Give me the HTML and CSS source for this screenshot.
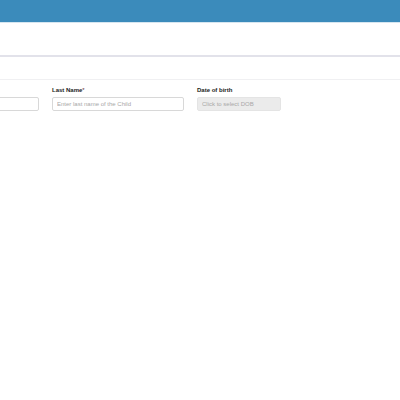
FILE: index.html
```html
<!DOCTYPE html>
<html>
<head>
<meta charset="utf-8">
<link rel="stylesheet" href="styles.css">
</head>
<body>
<header class="topbar"></header>
<div class="subbar"></div>
<div class="toolbar"></div>
<form class="form">
  <div class="row">
    <div class="field field-first">
      <span class="label"></span>
      <input class="input" type="text" aria-label="First Name">
    </div>
    <div class="field field-last">
      <label class="label">Last Name<span class="req">*</span></label>
      <input class="input" type="text" placeholder="Enter last name of the Child">
    </div>
    <div class="field field-dob">
      <label class="label">Date of birth</label>
      <input class="input input-readonly" type="text" placeholder="Click to select DOB" readonly>
    </div>
  </div>
</form>
</body>
</html>
```
FILE: styles.css
```css
html, body {
  margin: 0;
  padding: 0;
  background: #ffffff;
  font-family: "Liberation Sans", Arial, sans-serif;
}

.topbar {
  height: 22px;
  background: #3b8bbb;
  border-bottom: 1px solid #d6e6f0;
}

.subbar {
  height: 32px;
  background: #ffffff;
  border-bottom: 2px solid #e2e2ea;
}

.toolbar {
  height: 22px;
  background: #ffffff;
  border-bottom: 1px solid #f0f0f2;
}

.form {
  padding-top: 6px;
}

.row {
  display: flex;
  gap: 13px;
  margin-left: -93px;
}

.field {
  display: flex;
  flex-direction: column;
  gap: 3px;
}

.field-first,
.field-last {
  width: 132px;
}

.field-dob {
  width: 84px;
}

.label {
  font-size: 6px;
  font-weight: bold;
  color: #222222;
  line-height: 8px;
  height: 8px;
}

.req {
  color: #6a2f2f;
  font-weight: normal;
}

.input {
  box-sizing: border-box;
  height: 14px;
  width: 100%;
  margin: 0;
  padding: 0 4px;
  border: 1px solid #d8d8d8;
  border-radius: 2px;
  font-family: "Liberation Sans", Arial, sans-serif;
  font-size: 6px;
  color: #555555;
  background: #ffffff;
  outline: none;
}

.input::placeholder {
  color: #a8a8a8;
}

.input-readonly {
  background: #ebebeb;
  border-color: #e4e4e4;
}
```
